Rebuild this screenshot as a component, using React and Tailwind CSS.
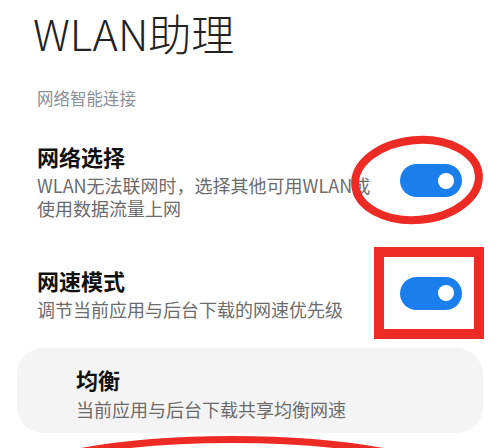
const Toggle = () => (
  <div className="flex items-center justify-end w-[62px] h-[33px] rounded-full bg-[#1a7fec] pr-[8px] shrink-0">
    <div className="w-[16px] h-[16px] rounded-full bg-white"></div>
  </div>
);

const SettingRow = ({ title, desc }) => (
  <div className="flex items-center justify-between pl-[37px] pr-[38px]">
    <div className="flex flex-col">
      <div className="text-[22px] leading-[30px] font-bold text-[#111]">{title}</div>
      <div className="text-[18px] leading-[23px] text-[#6b6b6b] mt-[3px] w-[350px]">{desc}</div>
    </div>
    <Toggle />
  </div>
);

const App = () => {
  return (
    <div
      className="relative w-[500px] h-[448px] overflow-hidden bg-white"
      style={{ fontFamily: '"Noto Sans CJK SC", "Noto Sans", sans-serif' }}
    >
      <div className="pt-[6px] pl-[33px]">
        <h1 className="text-[43px] leading-[52px] font-light text-[#222]">WLAN助理</h1>
      </div>

      <div className="mt-[28px] pl-[37px] text-[16.5px] leading-[24px] text-[#8a8f98]">
        网络智能连接
      </div>

      <div className="mt-[31px]">
        <SettingRow
          title="网络选择"
          desc="WLAN无法联网时，选择其他可用WLAN或使用数据流量上网"
        />
      </div>

      <div className="mt-[45px]">
        <SettingRow title="网速模式" desc="调节当前应用与后台下载的网速优先级" />
      </div>

      <div className="mt-[27px] mx-[17px] rounded-[26px] bg-[#f4f4f4] pl-[59px] pt-[16px] pb-[12px]">
        <div className="text-[22px] leading-[30px] font-bold text-[#111]">均衡</div>
        <div className="text-[18px] leading-[23px] text-[#6b6b6b] mt-[4px]">
          当前应用与后台下载共享均衡网速
        </div>
      </div>

      {/* red annotation marks drawn over the screenshot */}
      <svg
        className="absolute inset-0 pointer-events-none"
        width="500"
        height="448"
        viewBox="0 0 500 448"
      >
        <ellipse
          cx="417"
          cy="180"
          rx="62"
          ry="40"
          fill="none"
          stroke="#ee2a24"
          strokeWidth="8"
          transform="rotate(-5 417 180)"
        />
        <rect
          x="379"
          y="252"
          width="100"
          height="82"
          fill="none"
          stroke="#ee2a24"
          strokeWidth="10"
        />
        <ellipse
          cx="232"
          cy="504.5"
          rx="260"
          ry="65"
          fill="none"
          stroke="#ee2a24"
          strokeWidth="7"
        />
      </svg>
    </div>
  );
};

export default App;
